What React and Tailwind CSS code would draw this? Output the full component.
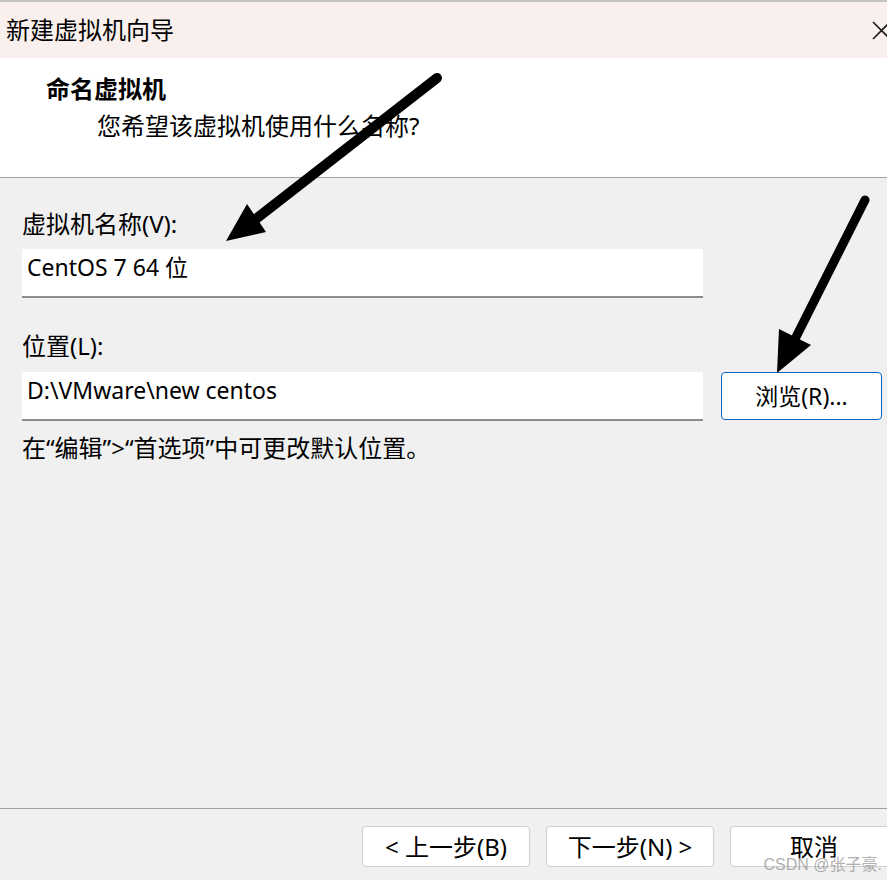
import React from 'react';

const font = { fontFamily: '"Noto Sans", "Noto Sans CJK SC", sans-serif' };

function Arrows() {
  // the two black annotation arrows drawn over the dialog
  return (
    <svg className="absolute inset-0 pointer-events-none" width="887" height="880" viewBox="0 0 887 880">
      <line x1="437" y1="78" x2="252" y2="222" stroke="#000" strokeWidth="10" strokeLinecap="round" />
      <polygon points="226,241 247,204 266,232" fill="#000" />
      <line x1="865" y1="200" x2="792" y2="345" stroke="#000" strokeWidth="9" strokeLinecap="round" />
      <polygon points="777,373 779,329 811,345" fill="#000" />
    </svg>
  );
}

export default function App() {
  return (
    <div className="relative w-[887px] h-[880px] overflow-hidden bg-[#f0f0f0] flex flex-col text-black" style={font}>
      <div className="h-[2px] bg-[#c4c4c4]" />
      <div className="h-[56px] bg-[#f9f0ed] flex items-center justify-between pl-[6px]">
        <span className="text-[24px] leading-[32px]">新建虚拟机向导</span>
        <svg width="19" height="19" viewBox="0 0 19 19" className="-mr-[4px]">
          <path d="M1 1 L18 18 M18 1 L1 18" stroke="#1a1a1a" strokeWidth="1.6" />
        </svg>
      </div>
      <div className="h-[120px] bg-white border-b border-[#a0a0a0] pl-[46px] pt-[15px]">
        <div className="text-[24px] leading-[32px] font-bold">命名虚拟机</div>
        <div className="text-[24px] leading-[32px] mt-[5px] pl-[51px]">您希望该虚拟机使用什么名称?</div>
      </div>
      <div className="flex-1 px-[22px] pt-[30px]">
        <div className="text-[24px] leading-[32px]">虚拟机名称(V):</div>
        <div className="mt-[9px] w-[681px] h-[49px] bg-white border-b-2 border-[#8c8c8c] pl-[5px] pt-[2px] text-[23px] leading-[32px]">
          CentOS 7 64 位
        </div>
        <div className="mt-[32px] text-[24px] leading-[32px]">位置(L):</div>
        <div className="mt-[10px] flex gap-[18px]">
          <div className="w-[681px] h-[49px] shrink-0 bg-white border-b-2 border-[#8c8c8c] pl-[5px] pt-[2px] text-[23px] leading-[32px]">
            D:\VMware\new centos
          </div>
          <button className="w-[161px] h-[48px] shrink-0 bg-white border border-[#0067c0] rounded-[4px] text-[23px] leading-[32px]">
            浏览(R)...
          </button>
        </div>
        <div className="mt-[11px] text-[24px] leading-[32px]">在“编辑”&gt;“首选项”中可更改默认位置。</div>
      </div>
      <div className="h-[72px] border-t border-[#a0a0a0] flex gap-[16px] pl-[362px] pt-[17px]">
        <button className="w-[168px] h-[41px] shrink-0 bg-white border border-[#d0d0d0] rounded-[4px] text-[24px] leading-[32px]">
          &lt; 上一步(B)
        </button>
        <button className="w-[168px] h-[41px] shrink-0 bg-white border border-[#d0d0d0] rounded-[4px] text-[24px] leading-[32px]">
          下一步(N) &gt;
        </button>
        <button className="w-[168px] h-[41px] shrink-0 bg-white border border-[#d0d0d0] rounded-[4px] text-[24px] leading-[32px]">
          取消
        </button>
      </div>
      <div
        className="absolute right-[5px] bottom-[5px] text-[16px] leading-[20px] text-[#9a9a9a]/80"
        style={{ fontFamily: '"Liberation Sans", "Noto Sans CJK SC", sans-serif' }}
      >
        CSDN @张子豪.
      </div>
      <Arrows />
    </div>
  );
}
